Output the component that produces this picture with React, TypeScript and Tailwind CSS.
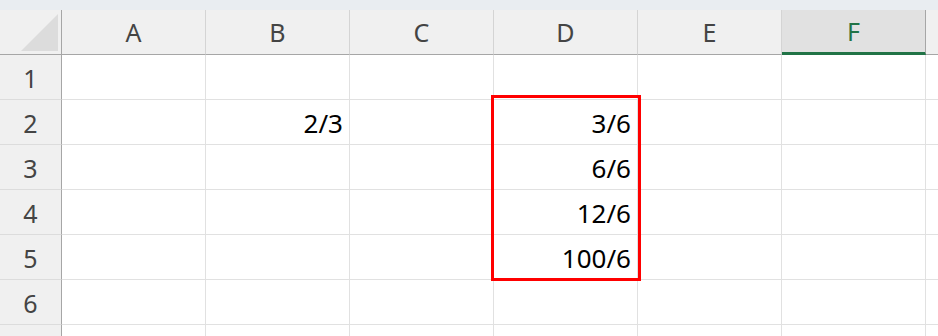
import React from "react";

const COLS = ["A", "B", "C", "D", "E", "F"];
const ROWS = [1, 2, 3, 4, 5, 6, 7];

// cell values keyed by "col+row"
const DATA: Record<string, string> = {
    B2: "2/3",
    D2: "3/6",
    D3: "6/6",
    D4: "12/6",
    D5: "100/6",
};

const font = { fontFamily: '"Noto Sans", "Open Sans", sans-serif' };

export default function App() {
    return (
        <div className="relative w-[938px] h-[336px] overflow-hidden bg-white" style={font}>
            {/* franja superior */}
            <div className="h-[10px] bg-[#e9edf1]" />

            {/* encabezado de columnas */}
            <div className="flex h-[45px]">
                <div className="relative w-[62px] shrink-0 bg-[#f0f0f0] border-r border-b border-[#a6a6a6]">
                    <div className="absolute right-[3px] bottom-[3px] w-0 h-0 border-l-[37px] border-l-transparent border-b-[37px] border-b-[#dcdcdc]" />
                </div>
                {COLS.map((c) =>
                    c === "F" ? (
                        <div
                            key={c}
                            className="w-[144px] shrink-0 flex items-center justify-center bg-[#e1e1e1] border-r border-r-[#a6a6a6] border-b-[3px] border-b-[#217346] text-[25px] text-[#217346] pt-[2px]"
                        >
                            {c}
                        </div>
                    ) : (
                        <div
                            key={c}
                            className="w-[144px] shrink-0 flex items-center justify-center bg-[#f0f0f0] border-r border-r-[#d4d4d4] border-b border-b-[#a6a6a6] text-[25px] text-[#444444] pt-[1px]"
                        >
                            {c}
                        </div>
                    )
                )}
                <div className="flex-1 bg-[#f0f0f0] border-b border-[#a6a6a6]" />
            </div>

            {/* filas */}
            {ROWS.map((r) => (
                <div key={r} className="flex h-[45px]">
                    <div className="w-[62px] shrink-0 flex items-center justify-center bg-[#f0f0f0] border-r border-r-[#a6a6a6] border-b border-b-[#dcdcdc] text-[25px] text-[#444444] pt-[4px]">
                        {r < 7 ? r : ""}
                    </div>
                    {COLS.map((c) => (
                        <div
                            key={c}
                            className="w-[144px] shrink-0 flex items-end justify-end px-[6px] pb-[3px] border-r border-b border-[#e1e1e1] text-[26px] leading-[36px] text-black"
                        >
                            {DATA[c + r] ?? ""}
                        </div>
                    ))}
                    <div className="flex-1 border-b border-[#e1e1e1]" />
                </div>
            ))}

            {/* selección roja D2:D5 */}
            <div className="absolute left-[491px] top-[95px] w-[150px] h-[186px] border-[3px] border-[#ff0000]" />
        </div>
    );
}
